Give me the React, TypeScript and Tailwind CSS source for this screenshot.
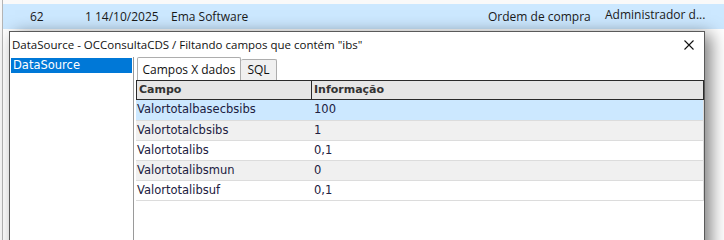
import React from "react";

const ui = { fontFamily: '"Open Sans", "Noto Sans", sans-serif' };
const tah = { fontFamily: '"DejaVu Sans", Verdana, sans-serif' };

const rows = [
  { c: "Valortotalbasecbsibs", v: "100", bg: "bg-[#cce8ff]", h: "h-[21px]" },
  { c: "Valortotalcbsibs", v: "1", bg: "bg-[#f0f0f0]", h: "h-[20px]" },
  { c: "Valortotalibs", v: "0,1", bg: "bg-white", h: "h-[20px]" },
  { c: "Valortotalibsmun", v: "0", bg: "bg-[#f0f0f0]", h: "h-[20px]" },
  { c: "Valortotalibsuf", v: "0,1", bg: "bg-white", h: "h-[20px]" },
];

export default function App() {
  return (
    <div className="relative w-[724px] h-[240px] overflow-hidden bg-white" style={ui}>
      {/* background app grid */}
      <div className="flex h-full">
        <div className="w-[2px] shrink-0 bg-[#f7f7f7]" />
        <div className="w-[1px] shrink-0 bg-[#b4b4b4]" />
        <div className="flex-1 flex flex-col">
          <div className="h-[4px] bg-[#f9f9f9]" />
          <div className="h-[25px] bg-[#cce8ff] flex items-center text-[12px] text-[#1a1a1a] relative">
            <span className="absolute left-[27px] top-[4px]">62</span>
            <span className="absolute left-[82px] top-[4px]">1</span>
            <span className="absolute left-[92px] top-[4px]">14/10/2025</span>
            <span className="absolute left-[168px] top-[4px]">Ema Software</span>
            <span className="absolute left-[485px] top-[4px]">Ordem de compra</span>
            <span className="absolute left-[602px] top-[2px]">Administrador d...</span>
          </div>
        </div>
      </div>

      {/* dialog */}
      <div className="absolute left-[9px] top-[31px] w-[696px] h-[230px] bg-white border border-[#5a5a5a] shadow-[6px_3px_16px_rgba(0,0,0,0.5)] flex flex-col">
        <div className="h-[25px] shrink-0 flex items-center justify-between pl-[2px] pr-[10px]">
          <span className="text-[11.5px] text-[#111]">DataSource - OCConsultaCDS / Filtando campos que contém "ibs"</span>
          <svg width="10" height="10" viewBox="0 0 10 10" className="mt-[1px]">
            <path d="M0.5 0.5 L9.5 9.5 M9.5 0.5 L0.5 9.5" stroke="#111" strokeWidth="1.1" />
          </svg>
        </div>
        <div className="flex flex-1">
          {/* left pane */}
          <div className="w-[123px] shrink-0 p-[1px]">
            <div className="h-[15px] bg-[#0078d7] text-white text-[11.5px] leading-[15px] pl-[2px]" style={tah}>
              DataSource
            </div>
          </div>
          <div className="w-[1px] shrink-0 bg-[#9a9a9a]" />
          <div className="w-[2px] shrink-0" />
          {/* tab control */}
          <div className="flex-1 flex flex-col">
            <div className="flex items-end h-[23px] pl-[1px]">
              <div className="h-[23px] w-[104px] border border-b-0 border-[#adadad] rounded-t-[2px] bg-white flex items-center justify-center text-[12px] text-[#111] pt-[1px]">
                Campos X dados
              </div>
              <div className="h-[21px] w-[36px] border border-b-0 border-l-0 border-[#adadad] rounded-t-[2px] bg-[#f0f0f0] flex items-center justify-center text-[12px] text-[#111]">
                SQL
              </div>
            </div>
            <div className="flex flex-col w-[568px]" style={tah}>
              <div className="flex h-[20px] bg-[#e6e6e6] border border-[#2a2a2a] text-[11px] font-bold text-[#333]">
                <div className="w-[175px] border-r border-[#2a2a2a] pl-[2px] leading-[18px]">Campo</div>
                <div className="flex-1 pl-[2px] leading-[18px]">Informação</div>
              </div>
              {rows.map((r) => (
                <div key={r.c} className={`flex ${r.h} ${r.bg} border-b border-r border-[#dcdcdc] text-[11.5px] text-[#202040] items-center`}>
                  <div className="w-[175px] pl-[1px]">{r.c}</div>
                  <div className="flex-1 pl-[3px]">{r.v}</div>
                </div>
              ))}
            </div>
          </div>
        </div>
      </div>
    </div>
  );
}
